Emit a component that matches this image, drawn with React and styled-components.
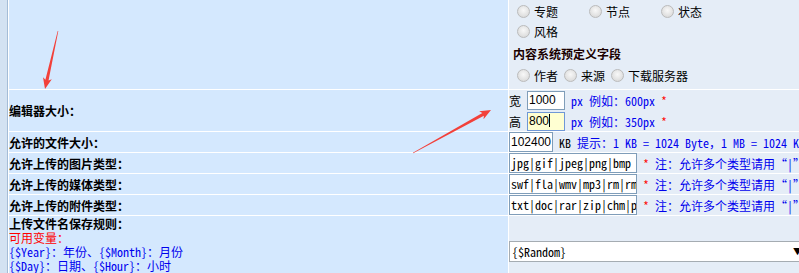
import React from "react";
import styled, { createGlobalStyle } from "styled-components";

const Global = createGlobalStyle`
  html, body { margin: 0; padding: 0; width: 799px; height: 273px; overflow: hidden; background: #fff; }
  body { font-family: "Noto Sans CJK SC", "Liberation Sans", sans-serif; font-size: 12px; color: #000; }
`;

const MONO = `"Noto Sans Mono CJK SC", "Liberation Mono", "Noto Sans CJK SC", monospace`;

const Page = styled.div`
  position: relative;
  display: flex;
  width: 1000px;
  height: 273px;
`;

const Strip = styled.div`
  width: 7px;
  flex: none;
  background: #d3e2f2;
  border-right: 1px solid #a4bcd6;
`;

const Table = styled.div`
  display: grid;
  grid-template-columns: 499px 440px;
  grid-template-rows: 89px 41px 20px 20px 20px 20px 70px;
  gap: 1px;
  padding-left: 1px;
  background: #fff;
  align-content: start;
`;

const Label = styled.div`
  background: #d4e8fe;
  display: flex;
  align-items: ${(p) => (p.$top ? "flex-start" : "center")};
  flex-direction: ${(p) => (p.$top ? "column" : "row")};
  font-weight: ${(p) => (p.$top ? "normal" : "bold")};
  white-space: nowrap;
  overflow: hidden;
`;

const Field = styled.div`
  background: #e5edf7;
  display: flex;
  flex-direction: ${(p) => (p.$col ? "column" : "row")};
  align-items: ${(p) => (p.$col ? "stretch" : "center")};
  white-space: nowrap;
  overflow: hidden;
  padding-left: ${(p) => p.$pl || 0}px;
`;

const RadioGrid = styled.div`
  display: grid;
  grid-template-columns: repeat(3, 72px);
  grid-auto-rows: 20px;
  padding-top: 1px;
`;

const RadioRow = styled.div`
  display: flex;
  align-items: center;
  height: 20px;
  gap: 2px;
`;

const RadioItem = styled.label`
  display: flex;
  align-items: center;
  height: 20px;
`;

const Radio = styled.span`
  display: inline-block;
  box-sizing: border-box;
  width: 13px;
  height: 13px;
  margin: 0 4px 0 4px;
  border-radius: 50%;
  border: 1px solid #bbbbbb;
  background: radial-gradient(circle at 50% 40%, #f8f8f8 0%, #e4e4e4 55%, #d2d2d2 100%);
`;

const Heading = styled.div`
  font-weight: bold;
  height: 20px;
  line-height: 20px;
  margin-top: 3px;
  margin-bottom: 1px;
  color: #1a0000;
`;

const Line = styled.div`
  display: flex;
  align-items: center;
  height: ${(p) => p.$h || 20}px;
`;

const Input = styled.div`
  box-sizing: border-box;
  width: ${(p) => p.$w}px;
  height: ${(p) => p.$h || 19}px;
  border: 1px solid ${(p) => (p.$focus ? "#6f97d6" : "#7f9db9")};
  background: ${(p) => (p.$focus ? "#ffffd2" : "#fff")};
  font-family: ${(p) => (p.$mono ? MONO : `"Liberation Sans", Arial, sans-serif`)};
  font-size: 12px;
  line-height: ${(p) => (p.$h || 19) - 2}px;
  padding-left: 1px;
  overflow: hidden;
  white-space: nowrap;
  flex: none;
  color: #000;
`;

const Caret = styled.span`
  display: inline-block;
  width: 1px;
  height: 13px;
  background: #000;
  vertical-align: -2px;
`;

const Mono = styled.span`
  font-family: ${MONO};
  font-size: 12px;
  color: ${(p) => p.$c || "#0000ee"};
  white-space: pre;
`;

const Star = styled.span`
  font-family: ${MONO};
  color: #ff0000;
  white-space: pre;
`;

const Char = styled.span`
  margin-right: 6px;
`;

const BoldLabel = styled.div`
  font-weight: bold;
  line-height: 15px;
`;

const RedText = styled.div`
  color: #ff0000;
  line-height: 14px;
`;

const BlueLine = styled.div`
  font-family: ${MONO};
  color: #0000ee;
  line-height: 14px;
`;

const Select = styled.div`
  box-sizing: border-box;
  width: 298px;
  height: 21px;
  border: 1px solid #a5acb2;
  background: #fff;
  display: flex;
  align-items: center;
  justify-content: space-between;
  padding: 0 0 0 2px;
  font-family: ${MONO};
  font-size: 12px;
`;

const SelArrow = styled.span`
  font-size: 9px;
  margin-right: 4px;
`;

const Overlay = styled.svg`
  position: absolute;
  left: 0;
  top: 0;
  pointer-events: none;
`;

function Arrow({ x1, y1, x2, y2 }) {
  const dx = x2 - x1, dy = y2 - y1, L = Math.hypot(dx, dy);
  const ux = dx / L, uy = dy / L, px = -uy, py = ux;
  const hl = 11, hw = 4.5, sw = 1.6, tw = 0.3;
  const bx = x2 - ux * hl, by = y2 - uy * hl;
  const p = (x, y, k) => `${(x + px * k).toFixed(2)},${(y + py * k).toFixed(2)}`;
  const pts = [
    p(x1, y1, tw), p(bx + ux * 2, by + uy * 2, sw), p(bx, by, hw), `${x2},${y2}`,
    p(bx, by, -hw), p(bx + ux * 2, by + uy * 2, -sw), p(x1, y1, -tw),
  ].join(" ");
  return <polygon points={pts} fill="#f2403a" />;
}

const TypeRow = ({ value }) => (
  <>
    <Input $w={128} $h={20} $mono>{value}</Input>
    <Star> * </Star>
    <Mono>注：允许多个类型请用“|”分隔</Mono>
  </>
);

export default function App() {
  return (
    <Page>
      <Global />
      <Strip />
      <Table>
        <Label />
        <Field $col $pl={4}>
          <RadioGrid>
            {["专题", "节点", "状态", "风格"].map((t) => (
              <RadioItem key={t}><Radio />{t}</RadioItem>
            ))}
          </RadioGrid>
          <Heading>内容系统预定义字段</Heading>
          <RadioRow>
            {["作者", "来源", "下载服务器"].map((t) => (
              <RadioItem key={t}><Radio />{t}</RadioItem>
            ))}
          </RadioRow>
        </Field>

        <Label>编辑器大小：</Label>
        <Field $col>
          <Line $h={21}>
            <Char>宽</Char>
            <Input $w={38}>1000</Input>
            <Mono> px 例如：600px </Mono><Star>*</Star>
          </Line>
          <Line $h={20}>
            <Char>高</Char>
            <Input $w={38} $focus>800<Caret /></Input>
            <Mono> px 例如：350px </Mono><Star>*</Star>
          </Line>
        </Field>

        <Label>允许的文件大小：</Label>
        <Field>
          <Input $w={44} $h={20}>102400</Input>
          <Mono $c="#000"> KB </Mono>
          <Mono>提示：1 KB = 1024 Byte，1 MB = 1024 KB</Mono>
        </Field>

        <Label>允许上传的图片类型：</Label>
        <Field><TypeRow value="jpg|gif|jpeg|png|bmp" /></Field>

        <Label>允许上传的媒体类型：</Label>
        <Field><TypeRow value="swf|fla|wmv|mp3|rm|rmvb" /></Field>

        <Label>允许上传的附件类型：</Label>
        <Field><TypeRow value="txt|doc|rar|zip|chm|pdf" /></Field>

        <Label $top>
          <BoldLabel>上传文件名保存规则：</BoldLabel>
          <RedText>可用变量：</RedText>
          <BlueLine>{"{$Year}：年份、{$Month}：月份"}</BlueLine>
          <BlueLine>{"{$Day}：日期、{$Hour}：小时"}</BlueLine>
        </Label>
        <Field>
          <Select>
            <span>{"{$Random}"}</span>
            <SelArrow>▼</SelArrow>
          </Select>
        </Field>
      </Table>
      <Overlay width="799" height="273" viewBox="0 0 799 273">
        <Arrow x1={58} y1={31} x2={45} y2={89} />
        <Arrow x1={413} y1={153} x2={491} y2={110} />
      </Overlay>
    </Page>
  );
}
